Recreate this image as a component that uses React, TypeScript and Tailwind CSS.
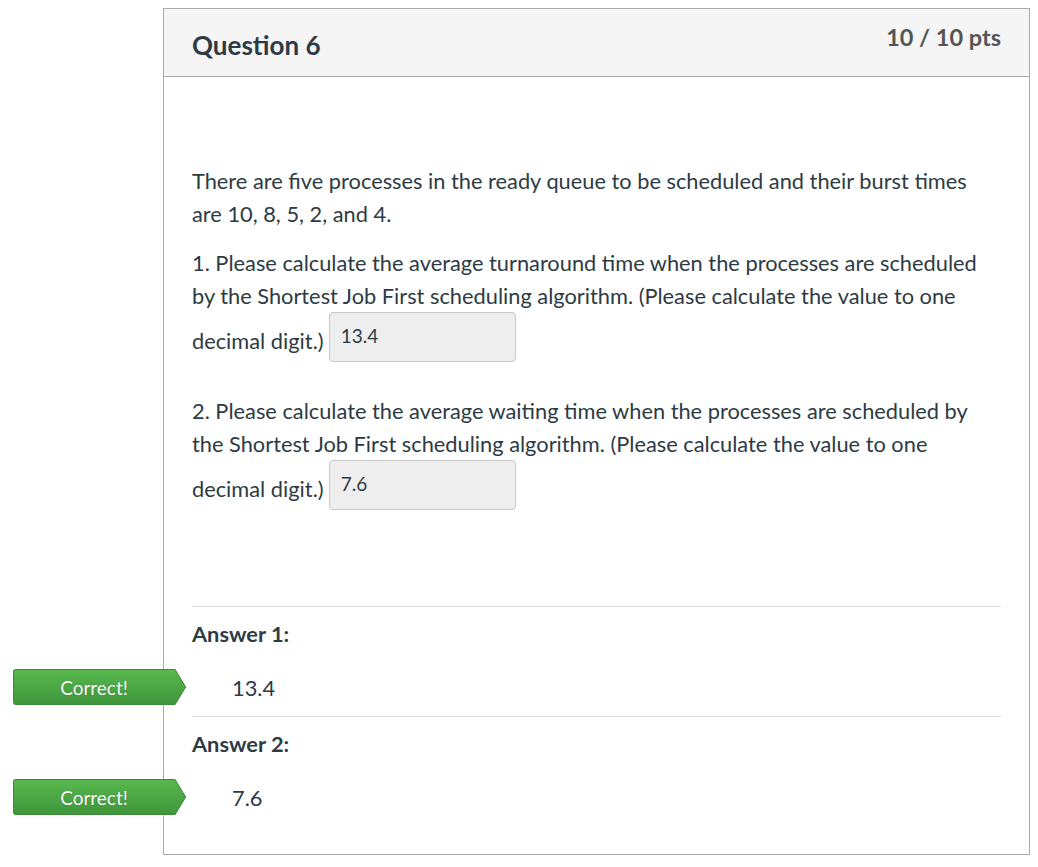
import React from "react";

function Badge() {
  return (
    <div className="absolute left-[-179px] top-1/2 -translate-y-1/2 flex items-center h-[36px]">
      <div className="w-[161px] h-[36px] bg-gradient-to-b from-[#58b84e] to-[#3f963b] border border-r-0 border-[#3b8a37] rounded-l-[3px] flex items-center justify-center text-white text-[19px] [text-shadow:0_0_1px_rgba(0,0,0,0.4)]">
        Correct!
      </div>
      <svg width="12" height="36" viewBox="0 0 12 36" className="block">
        <defs>
          <linearGradient id="gbadge" x1="0" y1="0" x2="0" y2="1">
            <stop offset="0" stopColor="#58b84e" />
            <stop offset="1" stopColor="#3f963b" />
          </linearGradient>
        </defs>
        <polygon points="0,0 1,0 12,18 1,36 0,36" fill="url(#gbadge)" />
        <polyline points="0,0.5 1,0.5 11.5,18 1,35.5 0,35.5" fill="none" stroke="#3b8a37" strokeWidth="1" />
      </svg>
    </div>
  );
}

function Input({ value }: { value: string }) {
  return (
    <span className="inline-block overflow-hidden align-[-13px] w-[187px] h-[50px] bg-[#eeeeee] border border-[#c8c8c8] rounded-[4px] px-[11px] pt-[12px] text-[19px] leading-[22px] text-[#2d3b45] ml-[5px]">
      {value}
    </span>
  );
}

function AnswerBlock({ label, value, mb }: { label: string; value: string; mb: string }) {
  return (
    <div className="border-t border-[#dddddd]">
      <div className="font-bold pt-[10px] leading-[33px]">{label}</div>
      <div className={`relative h-[40px] mt-[17px] flex items-center pl-[40px] ${mb}`}>
        <Badge />
        <span>{value}</span>
      </div>
    </div>
  );
}

export default function App() {
  return (
    <div className="w-[1038px] h-[867px] bg-white pt-[8px] font-['Lato','Noto_Sans',sans-serif] text-[#2d3b45]">
      <div className="ml-[163px] w-[867px] h-[847px] border border-[#aaaaaa] flex flex-col">
        <div className="h-[68px] bg-[#f5f5f5] border-b border-[#aaaaaa] flex justify-between items-start px-[28px]">
          <div className="text-[26px] font-bold mt-[20px] leading-[32px]">Question 6</div>
          <div className="text-[23.5px] font-bold text-[#555555] mt-[14px] leading-[28px]">10 / 10 pts</div>
        </div>
        <div className="px-[28px] pt-[87px] text-[21.8px] leading-[33px]">
          <p className="mb-[16px]">
            There are five processes in the ready queue to be scheduled and their burst times are 10, 8, 5, 2, and 4.
          </p>
          <p className="mb-[32px]">
            1. Please calculate the average turnaround time when the processes are scheduled by the Shortest Job First scheduling algorithm. (Please calculate the value to one decimal digit.)
            <Input value="13.4" />
          </p>
          <p>
            2. Please calculate the average waiting time when the processes are scheduled by the Shortest Job First scheduling algorithm. (Please calculate the value to one decimal digit.)
            <Input value="7.6" />
          </p>
          <div className="mt-[96px]">
            <AnswerBlock label="Answer 1:" value="13.4" mb="mb-[9px]" />
            <AnswerBlock label="Answer 2:" value="7.6" mb="mb-0" />
          </div>
        </div>
      </div>
    </div>
  );
}
